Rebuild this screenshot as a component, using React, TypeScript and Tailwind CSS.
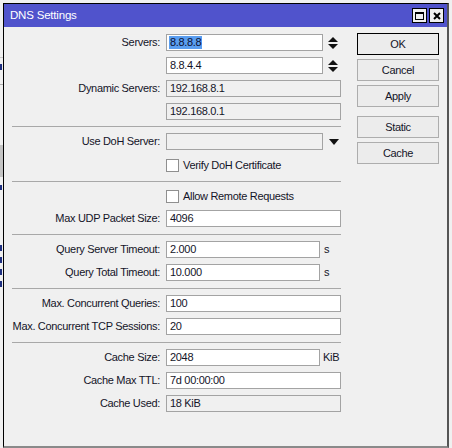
import React from "react"

const font = { fontFamily: '"Liberation Sans", Arial, sans-serif' }

function Spinner() {
  return (
    <svg width="10" height="12" viewBox="0 0 10 12" className="shrink-0">
      <path d="M0 5 L5 0 L10 5 Z" fill="#111" />
      <path d="M0 7 L5 12 L10 7 Z" fill="#111" />
    </svg>
  )
}

function DownArrow() {
  return (
    <svg width="10" height="6" viewBox="0 0 10 6" className="shrink-0">
      <path d="M0 0 L10 0 L5 6 Z" fill="#111" />
    </svg>
  )
}

function Label({ text }: { text?: string }) {
  return (
    <div className="w-[159px] shrink-0 pr-[3px] text-right whitespace-nowrap">
      {text ? text + ":" : ""}
    </div>
  )
}

function Field({
  value,
  width,
  disabled,
  selected,
}: {
  value: string
  width: string
  disabled?: boolean
  selected?: boolean
}) {
  return (
    <div
      className={`${width} h-[17px] shrink-0 border border-[#a3a3a3] flex items-center pl-[2px] leading-none ${
        disabled ? "bg-[#f0f0f0]" : "bg-white"
      }`}
    >
      {selected ? (
        <span className="bg-[#5a9ef0] text-[#0b1030] px-[1px] h-[13px] flex items-center">{value}</span>
      ) : (
        <span className="px-[1px]">{value}</span>
      )}
    </div>
  )
}

function Sep({ mt }: { mt: string }) {
  return <div className={`${mt} ml-[8px] w-[329px] h-px bg-[#a8a8a8]`} />
}

function Check({ text, mt }: { text: string; mt: string }) {
  return (
    <div className={`${mt} h-[17px] flex items-center`}>
      <Label />
      <div className="ml-[3px] w-[13px] h-[13px] bg-white border border-[#8f8f8f]" />
      <span className="ml-[4px]">{text}</span>
    </div>
  )
}

function Row({ mt, label, children }: { mt: string; label: string; children: React.ReactNode }) {
  return (
    <div className={`${mt} h-[17px] flex items-center`}>
      <Label text={label} />
      <div className="ml-[3px] flex items-center">{children}</div>
    </div>
  )
}

function Btn({ text, def, mt }: { text: string; def?: boolean; mt: string }) {
  return (
    <div
      className={`${mt} w-[82px] h-[22px] flex items-center justify-center bg-[#ececec] border ${
        def ? "border-black" : "border-[#adadad]"
      }`}
    >
      {text}
    </div>
  )
}

export default function App() {
  return (
    <div className="w-[452px] h-[448px] bg-[#f0f0f0] flex overflow-hidden text-[11px] tracking-[-0.32px] text-[#141428]" style={font}>
      {/* sliver of the window behind */}
      <div className="w-[3px] shrink-0 flex flex-col pt-[57px]">
        <div className="h-px bg-[#c8c8c8]" />
        <div className="mt-[6px] h-[6px] bg-[#1e2f80] w-[2px]" />
        <div className="mt-[14px] h-px bg-[#b0b0b0]" />
        <div className="mt-[60px] h-[32px] bg-[#c4c4c4]" />
        <div className="mt-[8px] h-[5px] bg-[#1e2f80] w-[2px]" />
        <div className="mt-[55px] h-[6px] bg-[#1e2f80] w-[2px]" />
        <div className="mt-[6px] h-[6px] bg-[#1e2f80] w-[2px]" />
        <div className="mt-[6px] h-[6px] bg-[#1e2f80] w-[2px]" />
        <div className="mt-[6px] h-[6px] bg-[#1e2f80] w-[2px]" />
      </div>

      <div className="mt-[3px] w-[446px] h-[445px] shrink-0 flex flex-col border-l border-t border-black border-r-2 border-r-[#555] border-b-2 border-b-[#8a8a8a] bg-[#f0f0f0]">
        {/* title bar */}
        <div className="h-[23px] shrink-0 bg-[#5053cc] flex items-center pl-[6px] pr-[3px]">
          <span className="text-white text-[11.5px] tracking-[-0.2px]">DNS Settings</span>
          <div className="ml-auto flex gap-[2px]">
            <div className="w-[15px] h-[15px] bg-[#f0f0f0] border border-black flex items-center justify-center">
              <div className="w-[9px] h-[8px] border border-black border-t-2" />
            </div>
            <div className="w-[15px] h-[15px] bg-[#f0f0f0] border border-black flex items-center justify-center">
              <svg width="8" height="8" viewBox="0 0 8 8">
                <path d="M1 1 L7 7 M7 1 L1 7" stroke="#000" strokeWidth="2" />
              </svg>
            </div>
          </div>
        </div>

        <div className="flex">
          {/* form */}
          <div className="w-[337px] flex flex-col">
            <Row mt="mt-[7px]" label="Servers">
              <Field value="8.8.8.8" width="w-[157px]" selected />
              <div className="ml-[5px]"><Spinner /></div>
            </Row>
            <Row mt="mt-[6px]" label="">
              <Field value="8.8.4.4" width="w-[157px]" />
              <div className="ml-[5px]"><Spinner /></div>
            </Row>
            <Row mt="mt-[6px]" label="Dynamic Servers">
              <Field value="192.168.8.1" width="w-[175px]" disabled />
            </Row>
            <Row mt="mt-[6px]" label="">
              <Field value="192.168.0.1" width="w-[175px]" disabled />
            </Row>
            <Sep mt="mt-[6px]" />
            <Row mt="mt-[6px]" label="Use DoH Server">
              <Field value="" width="w-[157px]" disabled />
              <div className="ml-[6px]"><DownArrow /></div>
            </Row>
            <Check mt="mt-[7px]" text="Verify DoH Certificate" />
            <Sep mt="mt-[7px]" />
            <Check mt="mt-[6px]" text="Allow Remote Requests" />
            <Row mt="mt-[5px]" label="Max UDP Packet Size">
              <Field value="4096" width="w-[175px]" />
            </Row>
            <Sep mt="mt-[7px]" />
            <Row mt="mt-[6px]" label="Query Server Timeout">
              <Field value="2.000" width="w-[154px]" />
              <span className="ml-[4px]">s</span>
            </Row>
            <Row mt="mt-[6px]" label="Query Total Timeout">
              <Field value="10.000" width="w-[154px]" />
              <span className="ml-[4px]">s</span>
            </Row>
            <Sep mt="mt-[7px]" />
            <Row mt="mt-[6px]" label="Max. Concurrent Queries">
              <Field value="100" width="w-[175px]" />
            </Row>
            <Row mt="mt-[6px]" label="Max. Concurrent TCP Sessions">
              <Field value="20" width="w-[175px]" />
            </Row>
            <Sep mt="mt-[7px]" />
            <Row mt="mt-[6px]" label="Cache Size">
              <Field value="2048" width="w-[154px]" />
              <span className="ml-[3px]">KiB</span>
            </Row>
            <Row mt="mt-[6px]" label="Cache Max TTL">
              <Field value="7d 00:00:00" width="w-[175px]" />
            </Row>
            <Row mt="mt-[6px]" label="Cache Used">
              <Field value="18 KiB" width="w-[175px]" disabled />
            </Row>
          </div>

          {/* buttons */}
          <div className="ml-[16px] flex flex-col">
            <Btn mt="mt-[6px]" text="OK" def />
            <Btn mt="mt-[4px]" text="Cancel" />
            <Btn mt="mt-[4px]" text="Apply" />
            <Btn mt="mt-[9px]" text="Static" />
            <Btn mt="mt-[4px]" text="Cache" />
          </div>
        </div>
      </div>
    </div>
  )
}
